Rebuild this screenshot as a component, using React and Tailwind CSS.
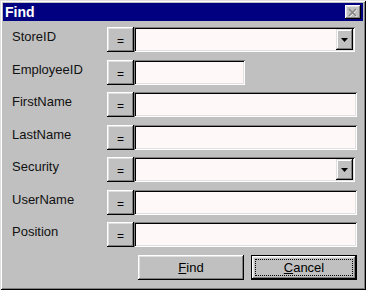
function EqBtn() {
  return (
    <div className="w-[27px] h-[25px] bg-[#c0c0c0] shadow-[inset_-1px_-1px_0_#000,inset_1px_1px_0_#fff,inset_-2px_-2px_0_#808080,inset_2px_2px_0_#dfdfdf] flex items-center justify-center shrink-0">
      <span className="text-[12px] leading-none pt-[3px] text-black">=</span>
    </div>
  );
}

function TextBox({ short }) {
  return (
    <div
      className={
        "h-[25px] bg-[#fff8f8] shadow-[inset_1px_1px_0_#808080,inset_-1px_-1px_0_#fff,inset_2px_2px_0_#000,inset_-2px_-2px_0_#dfdfdf] " +
        (short ? "w-[111px]" : "flex-1")
      }
    />
  );
}

function DropBox() {
  return (
    <div className="flex-1 mr-[2px] h-[25px] bg-[#fff8f8] shadow-[inset_1px_1px_0_#808080,inset_-1px_-1px_0_#fff,inset_2px_2px_0_#000,inset_-2px_-2px_0_#dfdfdf] flex justify-end p-[2px]">
      <div className="w-[17px] h-full bg-[#c0c0c0] shadow-[inset_-1px_-1px_0_#000,inset_1px_1px_0_#dfdfdf,inset_-2px_-2px_0_#808080,inset_2px_2px_0_#fff] flex items-center justify-center">
        <svg width="7" height="4" viewBox="0 0 7 4" className="block">
          <path d="M0 0H7L3.5 4Z" fill="#000" />
        </svg>
      </div>
    </div>
  );
}

function Row({ label, kind }) {
  return (
    <div className="flex items-start h-[25px]">
      <div className="w-[95px] shrink-0 text-[13px] leading-[15px] pt-[2px] text-[#111]">{label}</div>
      <EqBtn />
      {kind === "drop" ? <DropBox /> : kind === "short" ? <TextBox short /> : <TextBox />}
    </div>
  );
}

export default function App() {
  return (
    <div className="w-[366px] h-[290px] bg-[#c0c0c0] p-[3px] flex flex-col font-['Liberation_Sans',Arial,sans-serif] shadow-[inset_1px_1px_0_#dfdfdf,inset_-1px_-1px_0_#000,inset_2px_2px_0_#fff,inset_-2px_-2px_0_#808080]">
      <div className="h-[18px] bg-[#000080] flex items-center pl-[2px] pr-[2px] shrink-0">
        <span className="text-white font-bold text-[14px] leading-none">Find</span>
        <div className="ml-auto w-[16px] h-[14px] bg-[#c0c0c0] shadow-[inset_-1px_-1px_0_#000,inset_1px_1px_0_#fff,inset_-2px_-2px_0_#808080,inset_2px_2px_0_#dfdfdf] flex items-center justify-center">
          <svg width="10" height="9" viewBox="0 0 10 9" className="block">
            <path d="M1.5 1.5L8.5 8.5M8.5 1.5L1.5 8.5" stroke="#fff" strokeWidth="1.6" />
            <path d="M1 1L8 8M8 1L1 8" stroke="#808080" strokeWidth="1.6" />
          </svg>
        </div>
      </div>
      <div className="flex flex-col pt-[6px] pl-[9px] pr-[6px] gap-[7.5px]">
        <Row label="StoreID" kind="drop" />
        <Row label="EmployeeID" kind="short" />
        <Row label="FirstName" />
        <Row label="LastName" />
        <Row label="Security" kind="drop" />
        <Row label="UserName" />
        <Row label="Position" />
      </div>
      <div className="flex justify-end gap-[7px] pr-[6px] pt-[8px]">
        <div className="w-[106px] h-[25px] bg-[#c0c0c0] shadow-[inset_-1px_-1px_0_#000,inset_1px_1px_0_#fff,inset_-2px_-2px_0_#808080,inset_2px_2px_0_#dfdfdf] flex items-center justify-center text-[13px] text-black">
          <span><u>F</u>ind</span>
        </div>
        <div className="w-[106px] h-[25px] bg-[#c0c0c0] border border-black shadow-[inset_-1px_-1px_0_#000,inset_1px_1px_0_#fff,inset_-2px_-2px_0_#808080,inset_2px_2px_0_#dfdfdf] p-[3px]">
          <div className="w-full h-full border border-dotted border-black flex items-center justify-center text-[13px] text-black">
            <span><u>C</u>ancel</span>
          </div>
        </div>
      </div>
    </div>
  );
}
